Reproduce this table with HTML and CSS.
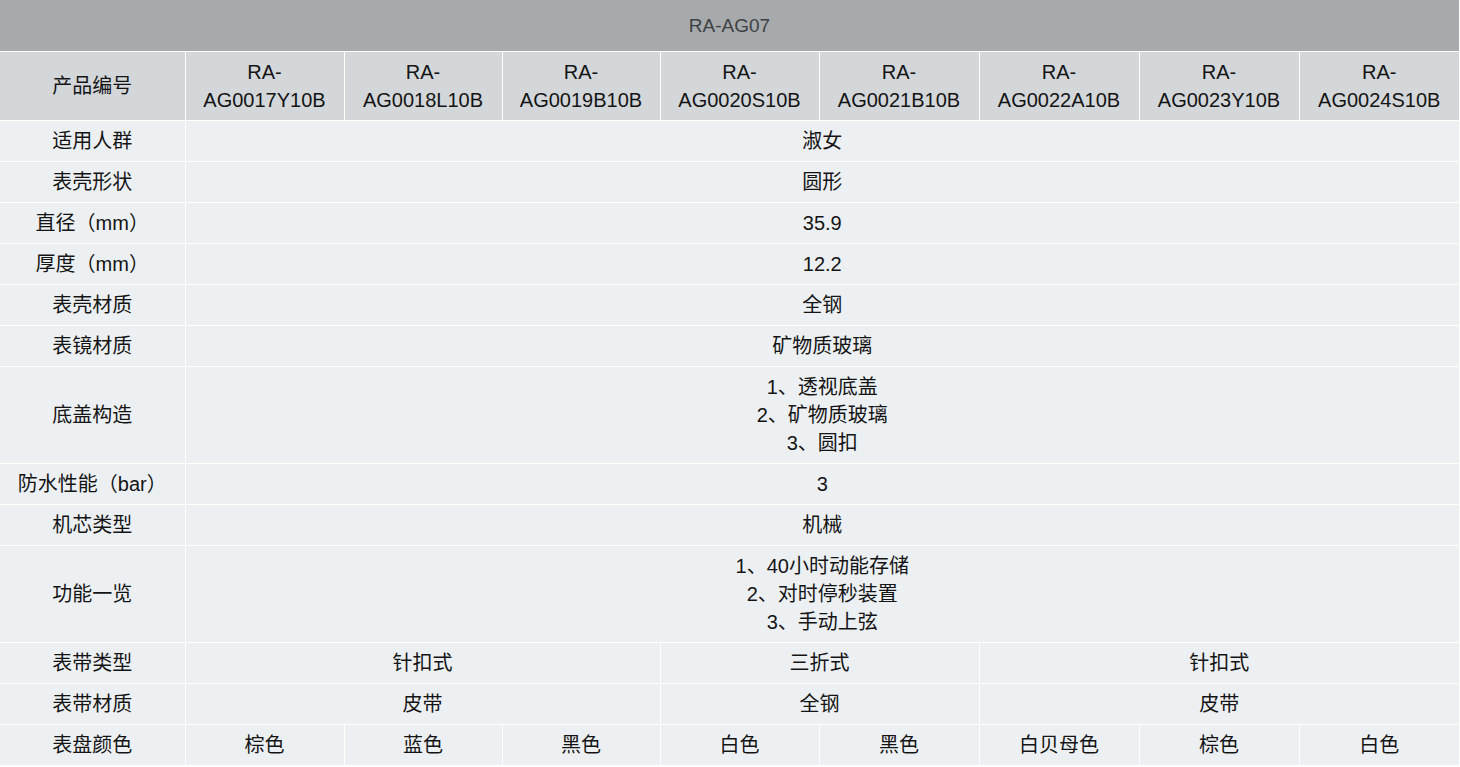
FILE: index.html
```html
<!DOCTYPE html>
<html lang="zh">
<head>
<meta charset="utf-8">
<title>RA-AG07</title>
<link rel="stylesheet" href="styles.css">
</head>
<body>
<table class="spec">
  <colgroup>
    <col class="c-label">
    <col class="c-a"><col class="c-b"><col class="c-b"><col class="c-a">
    <col class="c-c"><col class="c-c"><col class="c-c"><col class="c-c">
  </colgroup>
  <thead>
    <tr class="title"><th colspan="9">RA-AG07</th></tr>
    <tr class="head">
      <th>产品编号</th>
      <th>RA-<br>AG0017Y10B</th>
      <th>RA-<br>AG0018L10B</th>
      <th>RA-<br>AG0019B10B</th>
      <th>RA-<br>AG0020S10B</th>
      <th>RA-<br>AG0021B10B</th>
      <th>RA-<br>AG0022A10B</th>
      <th>RA-<br>AG0023Y10B</th>
      <th>RA-<br>AG0024S10B</th>
    </tr>
  </thead>
  <tbody>
    <tr><td>适用人群</td><td colspan="8">淑女</td></tr>
    <tr><td>表壳形状</td><td colspan="8">圆形</td></tr>
    <tr><td>直径（mm）</td><td colspan="8">35.9</td></tr>
    <tr><td>厚度（mm）</td><td colspan="8">12.2</td></tr>
    <tr><td>表壳材质</td><td colspan="8">全钢</td></tr>
    <tr><td>表镜材质</td><td colspan="8">矿物质玻璃</td></tr>
    <tr class="multi"><td>底盖构造</td><td colspan="8">1、透视底盖<br>2、矿物质玻璃<br>3、圆扣</td></tr>
    <tr><td>防水性能（bar）</td><td colspan="8">3</td></tr>
    <tr><td>机芯类型</td><td colspan="8">机械</td></tr>
    <tr class="multi"><td>功能一览</td><td colspan="8">1、40小时动能存储<br>2、对时停秒装置<br>3、手动上弦</td></tr>
    <tr><td>表带类型</td><td colspan="3">针扣式</td><td colspan="2">三折式</td><td colspan="3">针扣式</td></tr>
    <tr><td>表带材质</td><td colspan="3">皮带</td><td colspan="2">全钢</td><td colspan="3">皮带</td></tr>
    <tr><td>表盘颜色</td><td>棕色</td><td>蓝色</td><td>黑色</td><td>白色</td><td>黑色</td><td>白贝母色</td><td>棕色</td><td>白色</td></tr>
  </tbody>
</table>
</body>
</html>
```

FILE: styles.css
```css
html, body {
  margin: 0;
  padding: 0;
  background: #ffffff;
}

.spec {
  width: 1459px;
  table-layout: fixed;
  border-collapse: collapse;
  border-style: hidden;
  font-family: "Liberation Sans", Arial, "Noto Sans CJK SC", sans-serif;
  font-size: 20px;
  color: #141414;
}

.c-label { width: 185px; }
.c-a { width: 159px; }
.c-b { width: 158px; }
.c-c { width: 160px; }

.spec th,
.spec td {
  border: 1px solid #ffffff;
  text-align: center;
  vertical-align: middle;
  padding: 0;
  font-weight: normal;
}

.title th {
  height: 51px;
  background: #a6aaad;
  color: #3e4143;
  font-size: 19px;
}

.head th {
  height: 68px;
  background: #d3d7da;
  line-height: 28px;
}

.spec tbody td {
  height: 40px;
  background: #edf0f3;
  line-height: 28px;
}

.spec tbody tr.multi td {
  height: 96px;
}
```
